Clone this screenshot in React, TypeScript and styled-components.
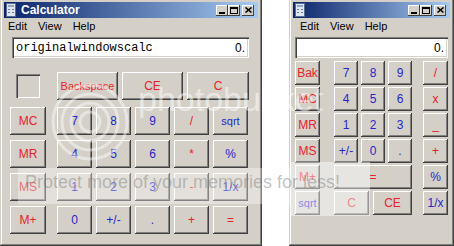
import React from "react";
import styled, { createGlobalStyle } from "styled-components";

const GlobalStyle = createGlobalStyle`
  html, body { margin: 0; padding: 0; background: #fff; }
  body { font-family: "Liberation Sans", Arial, sans-serif; }
  * { box-sizing: border-box; }
`;

const Page = styled.div`
  position: relative;
  width: 454px;
  height: 246px;
  overflow: hidden;
  display: flex;
  align-items: flex-start;
  background: #fff;
`;

const Window = styled.div<{ $w: number; $gap?: number }>`
  width: ${(p) => p.$w}px;
  height: 248px;
  margin-top: -2px;
  margin-left: ${(p) => p.$gap ?? 0}px;
  padding: 4px;
  background: #d4d0c8;
  box-shadow: inset -1px -1px #404040, inset 1px 1px #d4d0c8,
    inset -2px -2px #808080, inset 2px 2px #ffffff;
  display: flex;
  flex-direction: column;
  flex-shrink: 0;
`;

const TitleBar = styled.div`
  height: 16px;
  display: flex;
  align-items: center;
  padding: 0 4px 0 2px;
  background: linear-gradient(to right, #0a246a, #a6caf0);
`;

const TitleText = styled.span`
  flex: 1;
  margin-left: 5px;
  color: #fff;
  font-family: "Liberation Sans", Arial, sans-serif;
  font-weight: bold;
  font-size: 12px;
  line-height: 16px;
  white-space: nowrap;
`;

const TitleButtons = styled.div`
  display: flex;
  align-items: center;
`;

const CapButton = styled.div<{ $gapLeft?: number }>`
  width: 12px;
  height: 11px;
  margin-left: ${(p) => p.$gapLeft ?? 0}px;
  background: #d4d0c8;
  box-shadow: inset -1px -1px #404040, inset 1px 1px #fff;
  display: flex;
  align-items: center;
  justify-content: center;
`;

const MenuBar = styled.div<{ $indent: number }>`
  height: 15px;
  display: flex;
  align-items: center;
  gap: 11px;
  padding-left: ${(p) => p.$indent}px;
  font-family: "Liberation Sans", Arial, sans-serif;
  font-size: 11px;
  color: #000;
`;

const MenuItem = styled.span``;

const Display = styled.div<{ $indent: number; $w: number }>`
  margin: 4px 0 0 ${(p) => p.$indent}px;
  width: ${(p) => p.$w}px;
  height: 21px;
  background: #fff;
  box-shadow: inset 1px 1px #808080, inset 2px 2px #404040,
    inset -1px -1px #fff, inset -2px -2px #d4d0c8;
  display: flex;
  align-items: center;
  justify-content: space-between;
  padding: 1px 4px 0 4px;
`;

const DisplayLabel = styled.span`
  font-family: "Liberation Mono", "Courier New", monospace;
  font-size: 12px;
  color: #000;
`;

const DisplayValue = styled.span`
  font-family: "Liberation Sans", Arial, sans-serif;
  font-size: 12px;
  color: #000;
`;

const Keypad = styled.div<{ $top: number; $left: number; $gap: number }>`
  margin: ${(p) => p.$top}px 0 0 ${(p) => p.$left}px;
  display: flex;
  flex-direction: column;
  gap: ${(p) => p.$gap}px;
`;

const Row = styled.div<{ $below?: number }>`
  display: flex;
  align-items: center;
  margin-bottom: ${(p) => p.$below ?? 0}px;
`;

const Slot = styled.div<{ $w: number; $after: number }>`
  width: ${(p) => p.$w}px;
  margin-right: ${(p) => p.$after}px;
  display: flex;
  justify-content: center;
  flex-shrink: 0;
`;

const Group = styled.div<{ $gap: number; $w?: number }>`
  display: flex;
  gap: ${(p) => p.$gap}px;
  width: ${(p) => (p.$w ? `${p.$w}px` : "auto")};
  flex-shrink: 0;
`;

const Key = styled.div<{ $w: number; $h: number; $tone: "red" | "blue"; $size?: number }>`
  width: ${(p) => p.$w}px;
  height: ${(p) => p.$h}px;
  flex-shrink: 0;
  background: #d4d0c8;
  box-shadow: inset -1px -1px #404040, inset 1px 1px #ffffff,
    inset -2px -2px #808080, inset 2px 2px #d4d0c8;
  display: flex;
  align-items: center;
  justify-content: center;
  font-family: "Liberation Sans", Arial, sans-serif;
  font-size: ${(p) => p.$size ?? 12}px;
  color: ${(p) => (p.$tone === "red" ? "#e8222a" : "#2626c8")};
  white-space: nowrap;
`;

const MemoryBox = styled.div`
  width: 24px;
  height: 24px;
  box-shadow: inset 1px 1px #808080, inset 2px 2px #404040,
    inset -1px -1px #fff, inset -2px -2px #d4d0c8;
`;

const Overlay = styled.div`
  position: absolute;
  inset: 0;
  pointer-events: none;
`;

const Band = styled.div<{ $x: number; $y: number; $w: number; $h: number; $a: number }>`
  position: absolute;
  left: ${(p) => p.$x}px;
  top: ${(p) => p.$y}px;
  width: ${(p) => p.$w}px;
  height: ${(p) => p.$h}px;
  background: rgba(255, 255, 255, ${(p) => p.$a});
`;

const MarkText = styled.div`
  position: absolute;
  left: 138px;
  top: 80px;
  font-family: "Liberation Sans", Arial, sans-serif;
  font-size: 34px;
  color: rgba(255, 255, 255, 0.5);
  white-space: nowrap;
`;

const Slogan = styled.div`
  position: absolute;
  left: 25px;
  top: 172px;
  font-family: "Liberation Sans", Arial, sans-serif;
  font-size: 18px;
  color: rgba(120, 120, 120, 0.45);
  white-space: nowrap;
`;

const Swirl = styled.svg`
  position: absolute;
  left: 40px;
  top: 72px;
`;

const CalcIcon = () => (
  <svg width="10" height="14" viewBox="0 0 10 14">
    <rect x="0.5" y="0.5" width="9" height="13" fill="#dfe6f0" stroke="#5a6a8a" />
    <rect x="2" y="2" width="6" height="2" fill="#8fa8c8" />
    <rect x="2" y="6" width="2" height="1" fill="#6a7a9a" />
    <rect x="6" y="6" width="2" height="1" fill="#6a7a9a" />
    <rect x="2" y="9" width="2" height="1" fill="#6a7a9a" />
    <rect x="6" y="9" width="2" height="1" fill="#6a7a9a" />
  </svg>
);

const Caption = () => (
  <TitleButtons>
    <CapButton>
      <svg width="6" height="7" viewBox="0 0 6 7">
        <rect x="0" y="5" width="6" height="2" fill="#000" />
      </svg>
    </CapButton>
    <CapButton>
      <svg width="8" height="7" viewBox="0 0 8 7">
        <rect x="0.5" y="0.5" width="7" height="6" fill="none" stroke="#000" />
        <rect x="0" y="0" width="8" height="2" fill="#000" />
      </svg>
    </CapButton>
    <CapButton $gapLeft={2}>
      <svg width="7" height="6" viewBox="0 0 7 6">
        <path d="M0.5 0.5 L6.5 5.5 M6.5 0.5 L0.5 5.5" stroke="#000" strokeWidth="1.6" />
      </svg>
    </CapButton>
  </TitleButtons>
);

type K = { t: string; c: "red" | "blue"; w?: number; s?: number };

const leftRows: { side: K; keys: K[] }[] = [
  { side: { t: "MC", c: "red" }, keys: [{ t: "7", c: "blue" }, { t: "8", c: "blue" }, { t: "9", c: "blue" }, { t: "/", c: "red" }, { t: "sqrt", c: "blue", s: 11 }] },
  { side: { t: "MR", c: "red" }, keys: [{ t: "4", c: "blue" }, { t: "5", c: "blue" }, { t: "6", c: "blue" }, { t: "*", c: "red" }, { t: "%", c: "blue" }] },
  { side: { t: "MS", c: "red" }, keys: [{ t: "1", c: "blue" }, { t: "2", c: "blue" }, { t: "3", c: "blue" }, { t: "-", c: "red" }, { t: "1/x", c: "blue" }] },
  { side: { t: "M+", c: "red" }, keys: [{ t: "0", c: "blue" }, { t: "+/-", c: "blue" }, { t: ".", c: "blue" }, { t: "+", c: "red" }, { t: "=", c: "red" }] },
];

const rightRows: { side: K; mid: K[]; op: K }[] = [
  { side: { t: "Bak", c: "red" }, mid: [{ t: "7", c: "blue" }, { t: "8", c: "blue" }, { t: "9", c: "blue" }], op: { t: "/", c: "red" } },
  { side: { t: "MC", c: "red" }, mid: [{ t: "4", c: "blue" }, { t: "5", c: "blue" }, { t: "6", c: "blue" }], op: { t: "x", c: "red" } },
  { side: { t: "MR", c: "red" }, mid: [{ t: "1", c: "blue" }, { t: "2", c: "blue" }, { t: "3", c: "blue" }], op: { t: "_", c: "red" } },
  { side: { t: "MS", c: "red" }, mid: [{ t: "+/-", c: "blue" }, { t: "0", c: "blue" }, { t: ".", c: "blue" }], op: { t: "+", c: "red" } },
  { side: { t: "M+", c: "red" }, mid: [{ t: "=", c: "red", w: 78 }], op: { t: "%", c: "blue" } },
  { side: { t: "sqrt", c: "blue", s: 11 }, mid: [{ t: "C", c: "red", w: 35 }, { t: "CE", c: "red", w: 39 }], op: { t: "1/x", c: "blue" } },
];

export default function App() {
  return (
    <>
      <GlobalStyle />
      <Page>
        <Window $w={262}>
          <TitleBar>
            <CalcIcon />
            <TitleText>Calculator</TitleText>
            <Caption />
          </TitleBar>
          <MenuBar $indent={4}>
            <MenuItem>Edit</MenuItem>
            <MenuItem>View</MenuItem>
            <MenuItem>Help</MenuItem>
          </MenuBar>
          <Display $indent={8} $w={237}>
            <DisplayLabel>originalwindowscalc</DisplayLabel>
            <DisplayValue>0.</DisplayValue>
          </Display>
          <Keypad $top={14} $left={6} $gap={5}>
            <Row $below={2}>
              <Slot $w={36} $after={11}>
                <MemoryBox />
              </Slot>
              <Group $gap={4}>
                <Key $w={61} $h={28} $tone="red" $size={11}>Backspace</Key>
                <Key $w={61} $h={28} $tone="red">CE</Key>
                <Key $w={62} $h={28} $tone="red">C</Key>
              </Group>
            </Row>
            {leftRows.map((r) => (
              <Row key={r.side.t}>
                <Slot $w={36} $after={11}>
                  <Key $w={36} $h={28} $tone={r.side.c}>{r.side.t}</Key>
                </Slot>
                <Group $gap={4}>
                  {r.keys.map((k) => (
                    <Key key={k.t} $w={35} $h={28} $tone={k.c} $size={k.s}>{k.t}</Key>
                  ))}
                </Group>
              </Row>
            ))}
          </Keypad>
        </Window>

        <Window $w={165} $gap={27}>
          <TitleBar>
            <CalcIcon />
            <TitleText />
            <Caption />
          </TitleBar>
          <MenuBar $indent={7}>
            <MenuItem>Edit</MenuItem>
            <MenuItem>View</MenuItem>
            <MenuItem>Help</MenuItem>
          </MenuBar>
          <Display $indent={2} $w={153}>
            <DisplayLabel />
            <DisplayValue>0.</DisplayValue>
          </Display>
          <Keypad $top={3} $left={2} $gap={2}>
            {rightRows.map((r) => (
              <Row key={r.side.t}>
                <Slot $w={25} $after={14}>
                  <Key $w={25} $h={24} $tone={r.side.c} $size={r.side.s}>{r.side.t}</Key>
                </Slot>
                <Group $gap={r.mid.length === 2 ? 4 : 3} $w={78}>
                  {r.mid.map((k) => (
                    <Key key={k.t} $w={k.w ?? 24} $h={24} $tone={k.c}>{k.t}</Key>
                  ))}
                </Group>
                <Slot $w={25} $after={0} style={{ marginLeft: 11 }}>
                  <Key $w={25} $h={24} $tone={r.op.c}>{r.op.t}</Key>
                </Slot>
              </Row>
            ))}
          </Keypad>
        </Window>

        <Overlay>
          <Swirl width="100" height="100" viewBox="0 0 100 100">
            {[10, 19, 28, 37].map((r) => (
              <circle key={r} cx="50" cy="50" r={r} fill="none" stroke="rgba(255,255,255,0.45)" strokeWidth="3" />
            ))}
          </Swirl>
          <MarkText>photobucket</MarkText>
          <Band $x={18} $y={168} $w={272} $h={36} $a={0.35} />
          <Band $x={290} $y={162} $w={80} $h={54} $a={0.45} />
          <Slogan>Protect more of your memories for less!</Slogan>
        </Overlay>
      </Page>
    </>
  );
}
